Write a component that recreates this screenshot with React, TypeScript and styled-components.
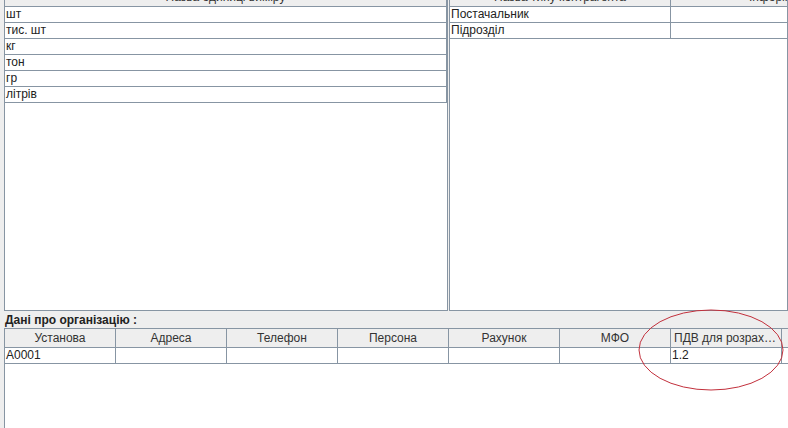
import { Fragment } from "react";
import styled, { createGlobalStyle } from "styled-components";

const GlobalStyle = createGlobalStyle`
  html, body {
    margin: 0;
    padding: 0;
    background: #eeeeee;
  }
  body {
    font-family: "Liberation Sans", Arial, sans-serif;
    font-size: 12px;
    color: #222;
  }
`;

const GRID = "#8795a3";

const Window = styled.div`
  position: relative;
  width: 788px;
  height: 428px;
  overflow: hidden;
  background: #eeeeee;
  display: flex;
  flex-direction: column;
`;

// top split pane, scrolled so the table headers are partly hidden
const SplitRow = styled.div`
  display: flex;
  height: 323px;
  margin-top: -12px;
  padding-left: 4px;
  gap: 1px;
  flex-shrink: 0;
`;

const ScrollPane = styled.div<{ $width?: number }>`
  ${(p) => (p.$width ? `width: ${p.$width}px;` : "flex: 1; min-width: 0;")}
  flex-shrink: 0;
  border: 1px solid ${GRID};
  background: #ffffff;
  overflow: hidden;
`;

const Table = styled.div<{ $cols: string }>`
  display: grid;
  grid-template-columns: ${(p) => p.$cols};
`;

const HeadCell = styled.div<{ $height: number }>`
  height: ${(p) => p.$height}px;
  line-height: ${(p) => p.$height}px;
  background: #eeeeee;
  border-right: 1px solid ${GRID};
  border-bottom: 1px solid ${GRID};
  text-align: center;
  color: #333;
  white-space: nowrap;
  overflow: hidden;
  text-overflow: ellipsis;
  padding: 0 3px;
`;

const Cell = styled.div`
  height: 15px;
  line-height: 15px;
  border-right: 1px solid ${GRID};
  border-bottom: 1px solid ${GRID};
  padding-left: 1px;
  white-space: nowrap;
  overflow: hidden;
  color: #222;
`;

const SectionLabel = styled.div`
  height: 16px;
  line-height: 16px;
  margin-top: 1px;
  padding-left: 5px;
  font-weight: bold;
  color: #222;
  flex-shrink: 0;
`;

const BottomPane = styled.div`
  flex: 1;
  margin-left: 4px;
  width: 900px;
  border-left: 1px solid ${GRID};
  border-top: 1px solid ${GRID};
  background: #ffffff;
`;

const Annotation = styled.svg`
  position: absolute;
  left: 636px;
  top: 307px;
  pointer-events: none;
`;

const units = ["шт", "тис. шт", "кг", "тон", "гр", "літрів"];
const contractorTypes = ["Постачальник", "Підрозділ"];
const orgColumns = [
  "Установа",
  "Адреса",
  "Телефон",
  "Персона",
  "Рахунок",
  "МФО",
  "ПДВ для розрахунку",
  "",
];
const orgRow = ["A0001", "", "", "", "", "", "1.2", ""];

export default function App() {
  return (
    <Window>
      <GlobalStyle />
      <SplitRow>
        <ScrollPane $width={442}>
          <Table $cols="1fr">
            <HeadCell $height={17}>Назва одиниці виміру</HeadCell>
            {units.map((u) => (
              <Cell key={u}>{u}</Cell>
            ))}
          </Table>
        </ScrollPane>
        <ScrollPane>
          <Table $cols="221px 221px">
            <HeadCell $height={17}>Назва типу контрагента</HeadCell>
            <HeadCell $height={17}>Інформація</HeadCell>
            {contractorTypes.map((t) => (
              <Fragment key={t}>
                <Cell>{t}</Cell>
                <Cell />
              </Fragment>
            ))}
          </Table>
        </ScrollPane>
      </SplitRow>
      <SectionLabel>Дані про організацію :</SectionLabel>
      <BottomPane>
        <Table $cols="repeat(8, 111px)">
          {orgColumns.map((c, i) => (
            <HeadCell key={"h" + i} $height={18}>
              {c}
            </HeadCell>
          ))}
          {orgRow.map((v, i) => (
            <Cell key={"r" + i}>{v}</Cell>
          ))}
        </Table>
      </BottomPane>
      <Annotation width="150" height="86" viewBox="0 0 150 86">
        <ellipse cx="75" cy="43" rx="72" ry="40" fill="none" stroke="#c2303c" strokeWidth="1" />
      </Annotation>
    </Window>
  );
}
